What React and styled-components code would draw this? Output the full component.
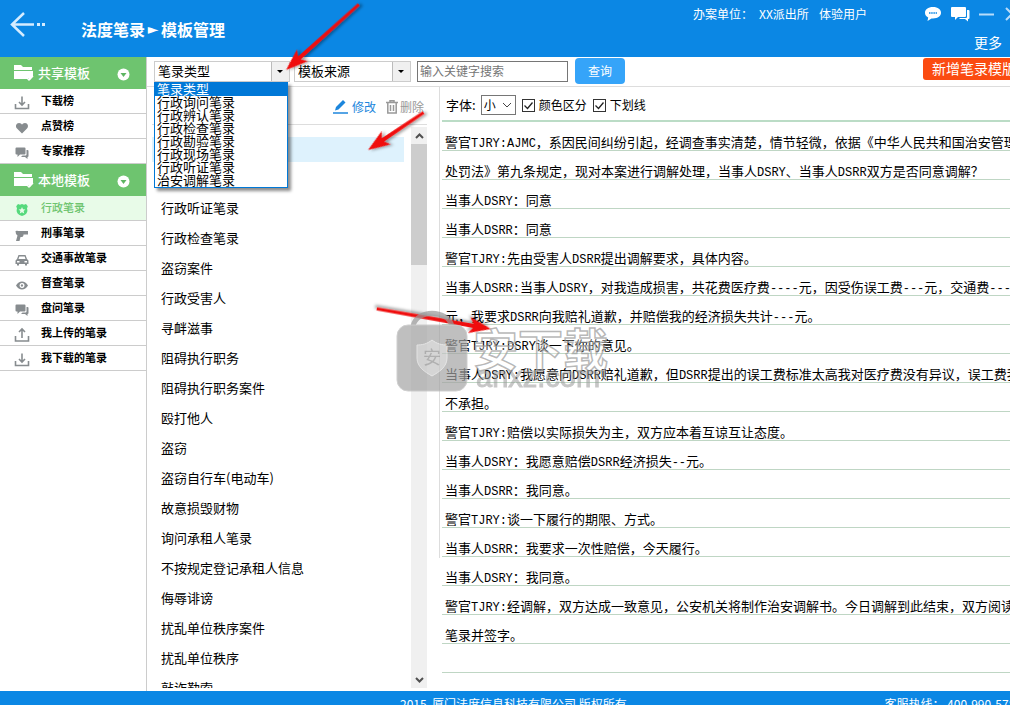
import { useState } from "react";
import styled, { createGlobalStyle, css } from "styled-components";

const GlobalStyle = createGlobalStyle`
  * {
    box-sizing: border-box;
  }
  body {
    margin: 0;
    overflow: hidden;
    font-family: "Noto Sans CJK SC", sans-serif;
    font-size: 13px;
    color: #000;
    background: #fff;
  }
  button, input, select {
    font-family: inherit;
  }
`;

const Page = styled.div`
  position: relative;
  display: flex;
  flex-direction: column;
  height: 100vh;
  overflow: hidden;
`;

/* header */

const Header = styled.header`
  display: flex;
  flex: none;
  height: 57px;
  overflow: hidden;
  color: #fff;
  background: #0b87e4;
`;

const BackButton = styled.button`
  display: flex;
  align-items: center;
  width: 81px;
  height: 47px;
  padding: 0 0 0 10px;
  border: 0;
  background: none;
`;

const Title = styled.h1`
  display: flex;
  flex: 1;
  align-items: center;
  height: 57px;
  margin: 0;
  font-size: 16px;
  font-weight: 700;
  white-space: nowrap;
`;

const TitleArrow = styled.span`
  width: 16px;
  font-family: "DejaVu Sans", sans-serif;
  font-size: 14px;
  text-align: center;
`;

const HeaderRight = styled.div`
  display: flex;
  flex-direction: column;
  flex: none;
  width: 317px;
`;

const HeaderTop = styled.div`
  display: flex;
  align-items: center;
  height: 30px;
  font-size: 12px;
  white-space: nowrap;
`;

const UnitLabel = styled.span`
  flex: none;
  width: 66px;
`;

const UnitName = styled.span`
  flex: none;
  width: 60px;
`;

const UserName = styled.span`
  flex: none;
  width: 105px;
`;

const WindowButton = styled.button`
  display: flex;
  flex: none;
  width: 27px;
  padding: 0;
  border: 0;
  background: none;
`;

const MoreLink = styled.a`
  align-self: flex-end;
  margin-right: 8px;
  color: #fff;
  font-size: 14px;
  line-height: 30px;
  text-decoration: none;
`;

/* sidebar */

const Body = styled.div`
  display: flex;
  flex: 1;
  min-height: 0;
`;

const Sidebar = styled.nav`
  flex: none;
  width: 147px;
  border-right: 1px solid #ccc;
`;

const GroupButton = styled.button`
  display: flex;
  align-items: center;
  width: 100%;
  height: 32px;
  padding: 0 16px 0 14px;
  border: 0;
  color: #fff;
  font-size: 13px;
  font-weight: 500;
  background: #6ec46f;
`;

const GroupLabel = styled.span`
  flex: 1;
  padding: 0 0 2px 4px;
  text-align: left;
`;

const MenuLink = styled.a`
  display: flex;
  align-items: center;
  height: 25px;
  padding: 0 0 2px 14px;
  border-bottom: 1px solid #ccc;
  color: ${({ $active }) => ($active ? "#6ec46f" : "#000")};
  font-size: 11px;
  font-weight: ${({ $active }) => ($active ? 500 : 700)};
  text-decoration: none;
  background: ${({ $active }) => ($active ? "#e8fbe8" : "#fff")};
`;

const MenuIcon = styled.span`
  display: flex;
  width: 27px;
  padding-top: 5px;
  color: ${({ $active }) => ($active ? "#55d97c" : "#878c8f")};
`;

/* search bar */

const Content = styled.main`
  display: flex;
  flex: 1;
  flex-direction: column;
  min-width: 0;
`;

const SearchBar = styled.form`
  display: flex;
  flex: none;
  height: 30px;
  padding: 1px 0 0 7px;
  border-bottom: 1px solid #ddd;
`;

const Combo = styled.div`
  position: relative;
  flex: none;
  width: ${({ $width }) => $width}px;
  height: 21px;
  margin: 3px 4px 0 0;
`;

const ComboSelect = styled.select`
  width: 100%;
  height: 100%;
  padding: 0 20px 2px 3px;
  border: 1px solid #ccc;
  border-radius: 0;
  outline: none;
  appearance: none;
  color: #000;
  font-size: 13px;
  line-height: 17px;
  background: linear-gradient(#bbb, #bbb) no-repeat right 17px top 0 / 1px 100%,
    linear-gradient(#f0f0f0, #f0f0f0) no-repeat right top / 17px 100%, #fff;
`;

const ComboArrow = styled.span`
  position: absolute;
  top: 9px;
  right: 7px;
  border: 3px solid transparent;
  border-top-color: #000;
  border-bottom: 0;
  pointer-events: none;
`;

const OptionList = styled.ul`
  position: absolute;
  z-index: 2;
  top: 21px;
  left: 0;
  width: 134px;
  margin: 0;
  padding: 0;
  border: 1px solid #0078d7;
  list-style: none;
  background: #fff;
  box-shadow: 3px 3px 3px rgba(0, 0, 0, 0.45);
`;

const Option = styled.li`
  height: 13px;
  padding-left: 2px;
  font-size: 13px;
  line-height: 11px;
  ${({ $selected }) =>
    $selected &&
    css`
      color: #fff;
      background: #0078d7;
    `}
`;

const SearchInput = styled.input`
  flex: none;
  width: 151px;
  height: 21px;
  margin: 3px 7px 0 2px;
  padding: 0 2px 2px;
  border: 1px solid #767676;
  font-size: 12px;
  &::placeholder {
    color: #757575;
  }
`;

const SearchButton = styled.button`
  flex: none;
  width: 50px;
  height: 26px;
  padding: 0 0 2px;
  border: 0;
  border-radius: 4px;
  color: #fff;
  font-size: 12px;
  background: #35a4f9;
`;

const AddButton = styled.button`
  flex: none;
  height: 22px;
  margin: 0 -16px 0 auto;
  padding: 0 10px 2px 9px;
  border: 0;
  border-radius: 3px;
  color: #fff;
  font-size: 14px;
  line-height: 20px;
  background: #fb4b11;
`;

/* template list */

const Panels = styled.div`
  display: flex;
  flex: 1;
  min-height: 0;
`;

const ListPanel = styled.section`
  display: flex;
  flex: none;
  flex-direction: column;
  width: 280px;
  padding: 0 0 3px 5px;
`;

const ListTools = styled.div`
  display: flex;
  flex: none;
  align-items: center;
  justify-content: flex-end;
  gap: 10px;
  height: 38px;
  padding: 2px 3px 0 0;
  border-bottom: 1px solid #ddd;
`;

const ToolButton = styled.button`
  display: flex;
  align-items: center;
  gap: ${({ $muted }) => ($muted ? 2 : 4)}px;
  padding: 0;
  border: 0;
  color: ${({ $muted }) => ($muted ? "#999" : "#1c86dc")};
  font-size: 12px;
  background: none;
`;

const ListScroll = styled.div`
  display: flex;
  flex: 1;
  min-height: 0;
  padding-top: 2px;
`;

const TemplateList = styled.ul`
  flex: 1;
  margin: 0;
  padding: 7px 7px 0 0;
  overflow: hidden;
  list-style: none;
`;

const TemplateItem = styled.li`
  display: flex;
  align-items: center;
  height: 30px;
`;

const TemplateButton = styled.button`
  width: 100%;
  height: 25px;
  padding: 0 0 4px 9px;
  border: 0;
  font-size: 13px;
  line-height: 21px;
  text-align: left;
  color: #000;
  background: ${({ $active }) => ($active ? "#def2fd" : "none")};
`;

const Scrollbar = styled.div`
  display: flex;
  flex: none;
  flex-direction: column;
  width: 16px;
  background: #f0f0f0;
`;

const ScrollArrow = styled.button`
  display: flex;
  align-items: center;
  justify-content: center;
  height: 17px;
  padding: 0;
  border: 0;
  color: #505050;
  background: none;
`;

const ScrollTrack = styled.div`
  flex: 1;
`;

const ScrollThumb = styled.div`
  height: 23%;
  background: #cdcdcd;
`;

/* document */

const DocPanel = styled.section`
  flex: 1;
  min-width: 0;
  margin-left: 12px;
  padding-left: 3px;
  overflow: hidden;
  background: linear-gradient(#ddd, #ddd) no-repeat left top / 1px 78%;
`;

const DocTools = styled.div`
  display: flex;
  align-items: center;
  height: 35px;
  padding: 2px 0 0 4px;
  border-bottom: 2px solid #bbdcc6;
  white-space: nowrap;
`;

const SizeSelect = styled.select`
  width: 35px;
  height: 20px;
  margin: 0 6px 0 5px;
  padding: 0 2px 2px;
  border: 1px solid #767676;
  border-radius: 0;
  appearance: none;
  color: #000;
  font-size: 12px;
  background: #fff
    url("data:image/svg+xml,%3Csvg xmlns='http://www.w3.org/2000/svg' width='10' height='6' fill='none' stroke='%23444'%3E%3Cpath d='M1 1l4 4 4-4'/%3E%3C/svg%3E")
    no-repeat right 3px center;
`;

const CheckLabel = styled.label`
  display: flex;
  align-items: center;
  gap: 4px;
  margin-right: 6px;
  font-size: 12px;
`;

const CheckInput = styled.input`
  width: 13px;
  height: 13px;
  margin: 2px 0 0;
  border: 1px solid #333;
  appearance: none;
  background: #fff;
  &:checked {
    background: #fff
      url("data:image/svg+xml,%3Csvg xmlns='http://www.w3.org/2000/svg' width='11' height='11' fill='none' stroke='%23222' stroke-width='1.3'%3E%3Cpath d='M1.5 5.5l3 3 5-6'/%3E%3C/svg%3E")
      no-repeat center;
  }
`;

const DocLine = styled.p`
  height: 29px;
  margin: 0;
  padding: 13px 0 0 3px;
  border-bottom: 1px solid #bfd6c4;
  line-height: 14px;
  white-space: nowrap;
`;

const Latin = styled.span`
  font-family: "Liberation Mono", monospace;
  font-size: 12px;
`;

/* footer */

const Footer = styled.footer`
  display: flex;
  flex: none;
  justify-content: space-between;
  height: 14px;
  padding: 5px 0 0 400px;
  overflow: hidden;
  color: #fff;
  font-size: 12px;
  line-height: 16px;
  white-space: pre;
  background: #0b87e4;
`;

const Hotline = styled.span`
  margin-right: -12px;
`;

const Overlay = styled.svg`
  position: absolute;
  z-index: 3;
  top: 0;
  left: 0;
  pointer-events: none;
`;

const types = [
  "笔录类型",
  "行政询问笔录",
  "行政辨认笔录",
  "行政检查笔录",
  "行政勘验笔录",
  "行政现场笔录",
  "行政听证笔录",
  "治安调解笔录",
];

const sharedMenu = [
  { label: "下载榜", icon: "download" },
  { label: "点赞榜", icon: "heart" },
  { label: "专家推荐", icon: "chat" },
];

const localMenu = [
  { label: "行政笔录", icon: "badge" },
  { label: "刑事笔录", icon: "gun" },
  { label: "交通事故笔录", icon: "car" },
  { label: "督查笔录", icon: "eye" },
  { label: "盘问笔录", icon: "chat" },
  { label: "我上传的笔录", icon: "upload" },
  { label: "我下载的笔录", icon: "download" },
];

const templates = [
  "治安调解笔录",
  "行政询问笔录",
  "行政听证笔录",
  "行政检查笔录",
  "盗窃案件",
  "行政受害人",
  "寻衅滋事",
  "阻碍执行职务",
  "阻碍执行职务案件",
  "殴打他人",
  "盗窃",
  "盗窃自行车(电动车)",
  "故意损毁财物",
  "询问承租人笔录",
  "不按规定登记承租人信息",
  "侮辱诽谤",
  "扰乱单位秩序案件",
  "扰乱单位秩序",
  "敲诈勒索",
];

const docLines = [
  "警官TJRY:AJMC，系因民间纠纷引起，经调查事实清楚，情节轻微，依据《中华人民共和国治安管理",
  "处罚法》第九条规定，现对本案进行调解处理，当事人DSRY、当事人DSRR双方是否同意调解？",
  "当事人DSRY：同意",
  "当事人DSRR：同意",
  "警官TJRY:先由受害人DSRR提出调解要求，具体内容。",
  "当事人DSRR:当事人DSRY，对我造成损害，共花费医疗费----元，因受伤误工费---元，交通费---",
  "元，我要求DSRR向我赔礼道歉，并赔偿我的经济损失共计---元。",
  "警官TJRY:DSRY谈一下你的意见。",
  "当事人DSRY:我愿意向DSRR赔礼道歉，但DSRR提出的误工费标准太高我对医疗费没有异议，误工费我",
  "不承担。",
  "警官TJRY:赔偿以实际损失为主，双方应本着互谅互让态度。",
  "当事人DSRY：我愿意赔偿DSRR经济损失--元。",
  "当事人DSRR：我同意。",
  "警官TJRY:谈一下履行的期限、方式。",
  "当事人DSRR：我要求一次性赔偿，今天履行。",
  "当事人DSRY：我同意。",
  "警官TJRY:经调解，双方达成一致意见，公安机关将制作治安调解书。今日调解到此结束，双方阅读",
  "笔录并签字。",
  "",
];

const iconPaths = {
  download: (
    <path
      d="M1.5 9v4.5h13V9M8 1.5v8M5 7l3 3 3-3"
      fill="none"
      stroke="currentColor"
      strokeWidth="1.6"
    />
  ),
  upload: (
    <path
      d="M1.5 9v5h13V9M8 11V2.500M5 5l3-3 3 3"
      fill="none"
      stroke="currentColor"
      strokeWidth="1.6"
    />
  ),
  heart: (
    <path d="M8 13.500L3 8.500C1 6.300 2.200 3 5 3c1.500 0 2.500.8 3 1.800C8.500 3.800 9.500 3 11 3c2.800 0 4 3.300 2 5.500z" />
  ),
  chat: (
    <path d="M2.500 2.500h8q1 0 1 1v5q0 1-1 1H6l-2.500 2.500V9.500h-1q-1 0-1-1v-5q0-1 1-1zM12.500 5h1q1 0 1 1v5q0 1-1 1v2L11 12H7l1.500-1.500h3q1 0 1-1z" />
  ),
  badge: (
    <path
      fillRule="evenodd"
      d="M4 2l2 .8L8 2l2 .8 2-.8 1.800 2.200L13 6.500c1.500 4-1.500 6.500-5 7.500-3.500-1-6.500-3.500-5-7.500L2.200 4.200zM8 5L7 7.300l-2.400.2 1.800 1.600-.6 2.400L8 10.200l2.200 1.300-.6-2.400 1.800-1.600L9 7.300z"
    />
  ),
  gun: (
    <path d="M1.500 4h1l.5-.8.5.8H14v3.500H9.500c0 2-1 2.700-3 2.500L5.500 14H2l1.500-5.500L2 7z" />
  ),
  car: (
    <path
      fillRule="evenodd"
      d="M4.500 3h7L13 7l1.500 1.500V12H13v1.500h-2V12H5v1.500H3V12H1.500V8.500L3 7zM5.300 4.500L4.500 7h7l-.8-2.500zM3 9v1.500h2.500V9zM10.500 9v1.500H13V9z"
    />
  ),
  eye: (
    <path
      fillRule="evenodd"
      d="M2 8.500C5 3.300 11 3.300 14 8.500 11 13.700 5 13.700 2 8.500zM8 6a2.500 2.500 0 1 0 .1 0zM8 7.300a1.200 1.200 0 1 1-.1 0z"
    />
  ),
};

function Icon({ name }) {
  return (
    <svg width="16" height="16" viewBox="0 0 16 16" fill="currentColor">
      {iconPaths[name]}
    </svg>
  );
}

function MenuGroup({ title, items, active, onSelect }) {
  const [open, setOpen] = useState(true);

  return (
    <>
      <GroupButton onClick={() => setOpen(!open)} aria-expanded={open}>
        <svg width="20" height="18" viewBox="0 0 20 18">
          <path d="M0 1h7l2 2h9v3H0zM0 7h19v5l-3 4-2-2-1 1H0z" fill="#fff" />
          <path
            d="M13 14l2 2 4-4"
            fill="none"
            stroke="#fff"
            strokeWidth="1.500"
          />
        </svg>
        <GroupLabel>{title}</GroupLabel>
        <svg width="13" height="15" viewBox="0 0 13 15">
          <circle cx="6.500" cy="8.500" r="6" fill="#fff" />
          <path d="M3.500 7h6l-3 4z" fill="#5eb562" />
        </svg>
      </GroupButton>
      {open &&
        items.map(({ label, icon }) => (
          <MenuLink
            key={label}
            href="#"
            $active={label === active}
            onClick={() => onSelect(label)}
          >
            <MenuIcon $active={label === active}>
              <Icon name={icon} />
            </MenuIcon>
            {label}
          </MenuLink>
        ))}
    </>
  );
}

function TypeCombo() {
  const [open, setOpen] = useState(true);
  const [value, setValue] = useState(types[0]);

  const handleMouseDown = (event) => {
    event.preventDefault();
    setOpen(!open);
  };

  const handlePick = (type) => {
    setValue(type);
    setOpen(false);
  };

  return (
    <Combo $width={136}>
      <ComboSelect
        aria-label="笔录类型"
        value={value}
        onMouseDown={handleMouseDown}
        onChange={(event) => setValue(event.target.value)}
      >
        {types.map((type) => (
          <option key={type}>{type}</option>
        ))}
      </ComboSelect>
      <ComboArrow />
      {open && (
        <OptionList role="listbox">
          {types.map((type) => (
            <Option
              key={type}
              role="option"
              aria-selected={type === value}
              $selected={type === value}
              onClick={() => handlePick(type)}
            >
              {type}
            </Option>
          ))}
        </OptionList>
      )}
    </Combo>
  );
}

function DocText({ text }) {
  return text
    .split(/([\x20-\x7e]+)/)
    .map((part, index) =>
      index % 2 ? <Latin key={index}>{part}</Latin> : part
    );
}

function RedArrow({ x, y, angle, length }) {
  return (
    <g transform={`translate(${x} ${y}) rotate(${angle})`}>
      <path
        d={`M0 0L22-8 18-2 ${length}-1.500V1.500L18 2 22 8z`}
        fill="#f01010"
        filter="url(#shadow)"
      />
    </g>
  );
}

function Annotations() {
  return (
    <Overlay width="640" height="400" viewBox="0 0 640 400">
      <defs>
        <filter id="shadow" x="-20%" y="-100%" width="140%" height="300%">
          <feDropShadow dx="2" dy="2" stdDeviation="1.500" floodOpacity="0.4" />
        </filter>
      </defs>
      <RedArrow x={286} y={70} angle={-42} length={98} />
      <RedArrow x={368} y={150} angle={-34} length={67} />
      <RedArrow x={491} y={329} angle={190} length={116} />
      <g opacity="0.7">
        <path
          d="M413 326c4-17 34-17 39 0"
          fill="none"
          stroke="#999"
          strokeWidth="5"
        />
        <rect
          x="397"
          y="325"
          width="70"
          height="66"
          rx="11"
          fill="#a4a4a4"
          stroke="#bbb"
        />
        <path
          d="M432 340c5 4 10 5 15 5v13c0 9-8 14-15 18-7-4-15-9-15-18v-13c5 0 10-1 15-5z"
          fill="#c4c4c4"
          stroke="#ddd"
        />
        <text x="423" y="364" fontSize="18" fill="#909090">
          安
        </text>
      </g>
      <text
        x="473"
        y="367"
        fontSize="45"
        fontWeight="700"
        fill="#fff"
        fillOpacity="0.3"
        stroke="#999"
        strokeOpacity="0.7"
        strokeWidth="1.500"
      >
        安下载
      </text>
      <text
        x="476"
        y="387"
        fontFamily="Liberation Sans"
        fontSize="29"
        fill="#999"
        stroke="#999"
        opacity="0.55"
      >
        anxz.com
      </text>
    </Overlay>
  );
}

function App() {
  const [menu, setMenu] = useState("行政笔录");
  const [selected, setSelected] = useState(0);
  const [source, setSource] = useState("模板来源");
  const [keyword, setKeyword] = useState("");

  return (
    <Page>
      <GlobalStyle />
      <Header>
        <BackButton aria-label="返回">
          <svg width="38" height="26" viewBox="0 0 38 26" fill="none" stroke="#d5ecff">
            <path d="M14 2L2 13.500 14 25M2 13.500h22" strokeWidth="2.500" />
            <path d="M27 13.500h3M32 13.500h3" strokeWidth="3" />
          </svg>
        </BackButton>
        <Title>
          法度笔录<TitleArrow>►</TitleArrow>模板管理
        </Title>
        <HeaderRight>
          <HeaderTop>
            <UnitLabel>办案单位：</UnitLabel>
            <UnitName>XX派出所</UnitName>
            <UserName>体验用户</UserName>
            <WindowButton aria-label="消息">
              <svg width="18" height="16" viewBox="0 0 18 16">
                <path
                  d="M9 1c5 0 8 2.500 8 5.800S14 12.500 9 12.500l-1.500 0L3.500 15l.7-3.500C2 10.500 1 8.800 1 6.800 1 3.500 4 1 9 1z"
                  fill="#fff"
                />
                <path d="M5 7h8" stroke="#0b87e4" strokeWidth="1.500" strokeDasharray="1.500 .7" />
              </svg>
            </WindowButton>
            <WindowButton aria-label="会话">
              <svg width="19" height="16" viewBox="0 0 19 16" fill="#fff">
                <path d="M1 1h13q1 0 1 1v8q0 1-1 1H7l-3 3v-3H1q-1 0-1-1V2q0-1 1-1zM16 4h1.500q1 0 1 1v7q0 1-1 1H17v2.500L14 13H8l1-1h6q1 0 1-1z" />
              </svg>
            </WindowButton>
            <WindowButton aria-label="最小化">
              <svg width="18" height="16" stroke="#b8dcfa" strokeWidth="2">
                <path d="M1 8.500h15" />
              </svg>
            </WindowButton>
            <WindowButton aria-label="关闭">
              <svg width="14" height="14" stroke="#b8dcfa" strokeWidth="2">
                <path d="M1 1l12 12M13 1L1 13" />
              </svg>
            </WindowButton>
          </HeaderTop>
          <MoreLink href="#">更多</MoreLink>
        </HeaderRight>
      </Header>

      <Body>
        <Sidebar>
          <MenuGroup
            title="共享模板"
            items={sharedMenu}
            active={menu}
            onSelect={setMenu}
          />
          <MenuGroup
            title="本地模板"
            items={localMenu}
            active={menu}
            onSelect={setMenu}
          />
        </Sidebar>

        <Content>
          <SearchBar onSubmit={(event) => event.preventDefault()}>
            <TypeCombo />
            <Combo $width={117}>
              <ComboSelect
                aria-label="模板来源"
                value={source}
                onChange={(event) => setSource(event.target.value)}
              >
                <option>模板来源</option>
              </ComboSelect>
              <ComboArrow />
            </Combo>
            <SearchInput
              aria-label="关键字"
              placeholder="输入关键字搜索"
              value={keyword}
              onChange={(event) => setKeyword(event.target.value)}
            />
            <SearchButton>查询</SearchButton>
            <AddButton type="button">新增笔录模版</AddButton>
          </SearchBar>

          <Panels>
            <ListPanel>
              <ListTools>
                <ToolButton>
                  <svg width="15" height="15" viewBox="0 0 15 15">
                    <path d="M3 8l7-7 2.500 2.500-7 7L2 11.500z" fill="currentColor" />
                    <path d="M0 14h15" stroke="currentColor" strokeWidth="1.500" />
                  </svg>
                  修改
                </ToolButton>
                <ToolButton $muted>
                  <svg
                    width="12"
                    height="14"
                    viewBox="0 0 12 14"
                    fill="none"
                    stroke="currentColor"
                    strokeWidth="1.500"
                  >
                    <path d="M0 2.500h12M4 2V.8h4V2M1.800 3v10h8.400V3M4.500 5v6M7.500 5v6" />
                  </svg>
                  删除
                </ToolButton>
              </ListTools>
              <ListScroll>
                <TemplateList>
                  {templates.map((name, index) => (
                    <TemplateItem key={name}>
                      <TemplateButton
                        $active={index === selected}
                        onClick={() => setSelected(index)}
                      >
                        {name}
                      </TemplateButton>
                    </TemplateItem>
                  ))}
                </TemplateList>
                <Scrollbar>
                  <ScrollArrow aria-label="向上">
                    <svg width="9" height="6" fill="none" stroke="currentColor" strokeWidth="2">
                      <path d="M1 5l3.500-3.500L8 5" />
                    </svg>
                  </ScrollArrow>
                  <ScrollTrack>
                    <ScrollThumb />
                  </ScrollTrack>
                  <ScrollArrow aria-label="向下">
                    <svg width="9" height="6" fill="none" stroke="currentColor" strokeWidth="2">
                      <path d="M1 1l3.500 3.500L8 1" />
                    </svg>
                  </ScrollArrow>
                </Scrollbar>
              </ListScroll>
            </ListPanel>

            <DocPanel>
              <DocTools>
                <label htmlFor="font-size">字体:</label>
                <SizeSelect id="font-size" defaultValue="小">
                  <option>小</option>
                  <option>中</option>
                  <option>大</option>
                </SizeSelect>
                <CheckLabel>
                  <CheckInput type="checkbox" defaultChecked />
                  颜色区分
                </CheckLabel>
                <CheckLabel>
                  <CheckInput type="checkbox" defaultChecked />
                  下划线
                </CheckLabel>
              </DocTools>
              {docLines.map((line, index) => (
                <DocLine key={index}>
                  <DocText text={line} />
                </DocLine>
              ))}
            </DocPanel>
          </Panels>
        </Content>
      </Body>

      <Footer>
        <span>2015  厦门法度信息科技有限公司 版权所有</span>
        <Hotline>客服热线： 400-990-5788</Hotline>
      </Footer>
      <Annotations />
    </Page>
  );
}

export default App;
